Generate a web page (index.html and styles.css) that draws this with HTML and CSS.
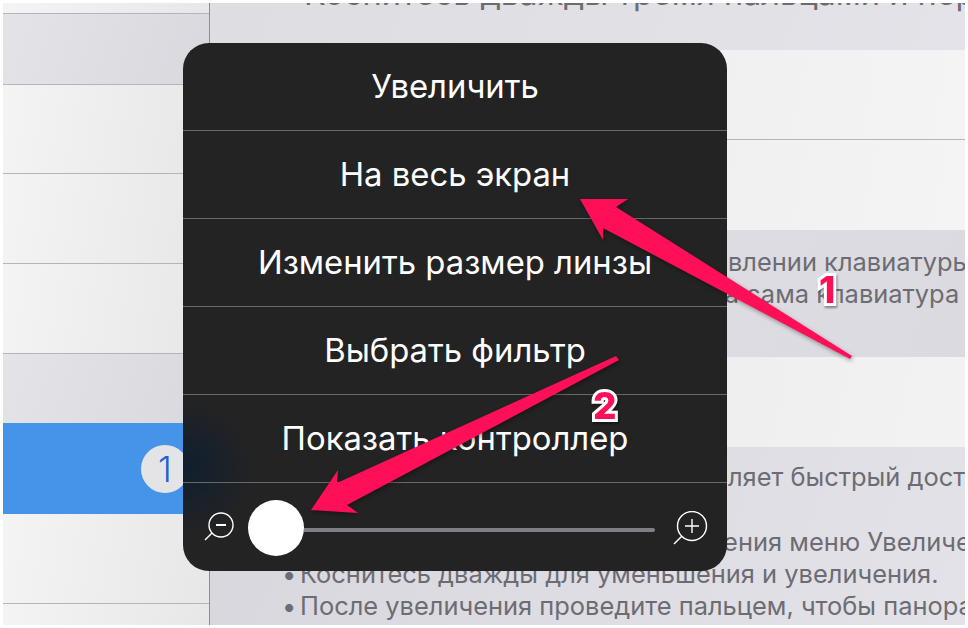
FILE: index.html
```html
<html>
<head>
<meta charset="utf-8">
<meta name="viewport" content="width=device-width, initial-scale=1">
<link rel="stylesheet" href="styles.css">
</head>
<body>
	<div class="screen">
		<div class="sidebar">
			<div class="row row-top"></div>
			<div class="row row-group row-h70"></div>
			<div class="row row-h88"></div>
			<div class="row row-h89"></div>
			<div class="row row-h89"></div>
			<div class="row row-group row-last"></div>
			<div class="row-active"><span class="count">1</span></div>
			<div class="row row-h89"></div>
			<div class="row row-end"></div>
		</div>
		<div class="pane">
			<div class="note note-top">
				<p class="line line-top">Коснитесь дважды тремя пальцами и перетащите</p>
			</div>
			<div class="cell cell-a"></div>
			<div class="cell cell-b"></div>
			<div class="note note-keys">
				<p class="line line-keys">При появлении клавиатуры</p>
				<p class="line line-keys2">будет увеличен текст, а сама клавиатура не</p>
			</div>
			<div class="cell cell-c"></div>
			<div class="note note-ctrl">
				<p class="line line-ctrl">Контроллер предоставляет быстрый доступ</p>
				<p class="line line-gap">&nbsp;</p>
				<p class="line line-tap">Нажмите один раз для отображения меню Увеличения.</p>
				<p class="line"><span class="dot">•</span>Коснитесь дважды для уменьшения и увеличения.</p>
				<p class="line"><span class="dot">•</span>После увеличения проведите пальцем, чтобы панорамировать</p>
			</div>
		</div>
	</div>

	<div class="menu">
		<div class="menu-item">Увеличить</div>
		<div class="menu-item">На весь экран</div>
		<div class="menu-item">Изменить размер линзы</div>
		<div class="menu-item">Выбрать фильтр</div>
		<div class="menu-item">Показать контроллер</div>
		<div class="zoom-row">
			<svg class="zoom-out" width="32" height="32" viewBox="0 0 32 32">
				<circle cx="18" cy="13" r="12" fill="none" stroke="#fff" stroke-width="1.4"/>
				<path d="M13 13h10" stroke="#fff" stroke-width="2"/>
				<path d="M9 21l-7 7" stroke="#fff" stroke-width="1.4"/>
			</svg>
			<div class="thumb"></div>
			<div class="track"></div>
			<svg class="zoom-in" width="36" height="36" viewBox="0 0 36 36">
				<circle cx="19" cy="15" r="14.5" fill="none" stroke="#fff" stroke-width="1.4"/>
				<path d="M12 15h14M19 8v14" stroke="#fff" stroke-width="1.4"/>
				<path d="M9 25l-8 8" stroke="#fff" stroke-width="1.4"/>
			</svg>
		</div>
	</div>

	<svg class="arrows" width="968" height="628" viewBox="0 0 968 628">
		<polygon points="580,199 628,199 616,207 852,356 850,359 603,228 603,240" fill="#ff0f57"/>
		<polygon points="311,510 338,470 337,483 616,356 619,360 347,505 358,513" fill="#ff0f57"/>
	</svg>
	<span class="mark mark-one">1</span>
	<span class="mark mark-two">2</span>
</body>
</html>
```

FILE: styles.css
```css
body {
	margin: 0;
	width: 968px;
	height: 628px;
	overflow: hidden;
	background: #fff;
	position: relative;
	font-family: "Inter", "Noto Sans", sans-serif;
}

.screen {
	display: flex;
	margin: 3px 3px 0 3px;
	height: 622px;
	overflow: hidden;
	box-shadow: 0 0 2px #fff;
}

.sidebar {
	width: 206px;
	flex: none;
	border-right: 1px solid #8f8e93;
	display: flex;
	flex-direction: column;
}

.row {
	flex: none;
	box-sizing: content-box;
	background: linear-gradient(100deg, #f4f4f4, #e7e7e7);
	border-bottom: 1px solid #b5b4b7;
}

.row-top {
	height: 10px;
}
.row-h70 {
	height: 70px;
}
.row-h88 {
	height: 88px;
}
.row-h89 {
	height: 89px;
}
.row-group {
	background: linear-gradient(110deg, #e3e3e8, #d9d8de);
}
.row-last {
	height: 69px;
	border-bottom: 0;
}
.row-end {
	height: 30px;
	border-bottom: 0;
}

.row-active {
	flex: none;
	height: 91px;
	background: #4694e9;
	display: flex;
	align-items: center;
	justify-content: flex-end;
}

.count {
	width: 48px;
	height: 48px;
	margin-right: 20px;
	border-radius: 50%;
	background: #e4e4e6;
	color: #1f5fd8;
	font-size: 35px;
	font-weight: 300;
	line-height: 48px;
	text-align: center;
}

.pane {
	flex: 1;
	display: flex;
	flex-direction: column;
	color: #6d6c72;
	font-size: 25.45px;
}

.line {
	margin: 0;
	line-height: 32px;
	height: 32px;
	white-space: nowrap;
	overflow: hidden;
}

.note {
	flex: none;
	background: linear-gradient(110deg, #d8d7dd, #e4e4ea);
	overflow: hidden;
	box-sizing: border-box;
	padding-left: 93px;
}

.note-top {
	height: 47px;
	background: linear-gradient(110deg, #dddde2, #e4e4ea);
}

.line-top {
	margin-top: -25px;
	font-size: 32.5px;
	overflow: visible;
	padding-left: 1px;
}

.note-keys {
	height: 127px;
	padding-top: 16px;
	background: linear-gradient(110deg, #e0e0e6, #dad9df);
}

.line-keys {
	padding-left: 324px;
}

.line-keys2 {
	padding-left: 140px;
}

.note-ctrl {
	height: 178px;
	padding-top: 14px;
	padding-left: 72px;
}

.line-ctrl {
	padding-left: 158px;
}

.line-gap {
	height: 33px;
}

.line-tap {
	padding-left: 42px;
}

.dot {
	display: inline-block;
	width: 18px;
}

.cell {
	flex: none;
	background: linear-gradient(100deg, #e9e9e9, #f6f6f6);
}
.cell-a {
	height: 89px;
	border-bottom: 1px solid #b5b4b7;
}
.cell-b {
	height: 90px;
}
.cell-c {
	height: 90px;
	background: linear-gradient(100deg, #e6e6e6, #f5f5f5);
}

.menu {
	position: absolute;
	left: 183px;
	top: 43px;
	width: 544px;
	height: 528px;
	border-radius: 26px;
	overflow: hidden;
	background: radial-gradient(circle 70px at 0 425px, #0f1f2e, rgba(15,31,46,0)), #232324;
	display: flex;
	flex-direction: column;
	color: #fff;
	font-size: 32.8px;
	text-align: center;
}

.menu-item {
	flex: none;
	height: 87px;
	line-height: 87px;
	border-bottom: 1px solid #68686a;
}

.zoom-row {
	flex: 1;
	display: flex;
	align-items: center;
	padding: 0 18px 0 20px;
}

.zoom-out {
	flex: none;
	margin-top: 2px;
}

.zoom-in {
	flex: none;
	margin-left: 18px;
	margin-top: 4px;
}

.thumb {
	flex: none;
	width: 56px;
	height: 56px;
	margin-left: 13px;
	border-radius: 50%;
	background: #fff;
	margin-top: 2px;
}

.track {
	flex: 1;
	height: 4px;
	margin-top: 5px;
	border-radius: 0 2px 2px 0;
	background: #807f85;
}

.arrows {
	position: absolute;
	left: 0;
	top: 0;
	filter: drop-shadow(1px 2px 2px rgba(0,0,0,0.35));
}

.mark {
	position: absolute;
	color: #ff0f57;
	font-family: "Inter", sans-serif;
	font-size: 37px;
	font-weight: 800;
	line-height: 40px;
	-webkit-text-stroke: 6px #fff;
	paint-order: stroke fill;
	filter: drop-shadow(1px 2px 1px rgba(0,0,0,0.4));
}

.mark-one {
	left: 819px;
	top: 270px;
}

.mark-two {
	left: 593px;
	top: 386px;
}
```
